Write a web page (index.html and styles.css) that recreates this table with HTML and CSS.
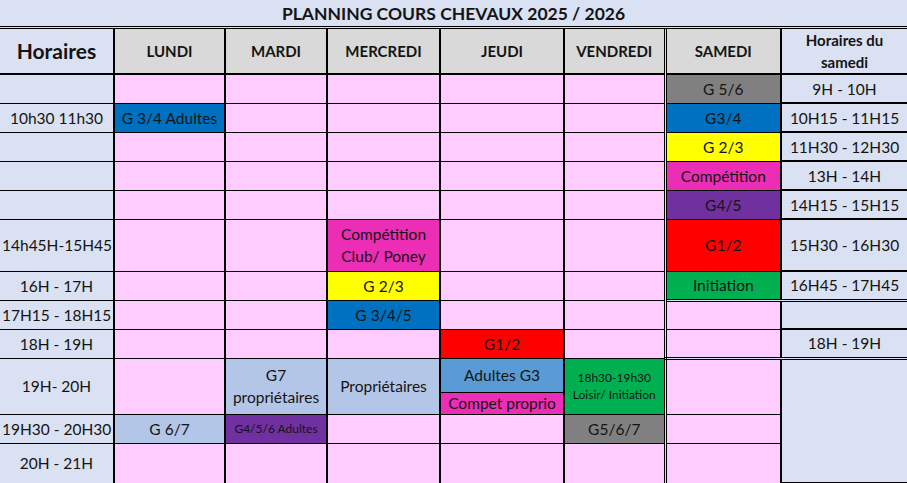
FILE: index.html
```html
<!DOCTYPE html>
<html lang="fr">
<head>
    <meta charset="UTF-8">
    <meta name="viewport" content="width=device-width, initial-scale=1.0">
    <title>Planning cours chevaux 2025 / 2026</title>
    <link rel="stylesheet" href="styles.css">
</head>
<body>

<table class="planning">
    <colgroup>
        <col class="c-time">
        <col class="c-lun">
        <col class="c-mar">
        <col class="c-mer">
        <col class="c-jeu">
        <col class="c-ven">
        <col class="c-sam">
        <col class="c-sat-time">
    </colgroup>
    <tr class="r-title">
        <td class="title" colspan="8">PLANNING COURS CHEVAUX 2025 / 2026</td>
    </tr>
    <tr class="r-head">
        <th class="time head-main">Horaires</th>
        <th class="day">LUNDI</th>
        <th class="day">MARDI</th>
        <th class="day">MERCREDI</th>
        <th class="day">JEUDI</th>
        <th class="day">VENDREDI</th>
        <th class="day sam">SAMEDI</th>
        <th class="sat-time head-sat">Horaires du<br>samedi</th>
    </tr>
    <tr class="r-slot">
        <td class="time"></td>
        <td class="pink"></td><td class="pink"></td><td class="pink"></td><td class="pink"></td><td class="pink"></td>
        <td class="sam gray">G 5/6</td>
        <td class="sat-time">9H - 10H</td>
    </tr>
    <tr class="r-slot">
        <td class="time">10h30 11h30</td>
        <td class="blue">G 3/4 Adultes</td>
        <td class="pink"></td><td class="pink"></td><td class="pink"></td><td class="pink"></td>
        <td class="sam blue">G3/4</td>
        <td class="sat-time">10H15 - 11H15</td>
    </tr>
    <tr class="r-slot">
        <td class="time"></td>
        <td class="pink"></td><td class="pink"></td><td class="pink"></td><td class="pink"></td><td class="pink"></td>
        <td class="sam yellow">G 2/3</td>
        <td class="sat-time">11H30 - 12H30</td>
    </tr>
    <tr class="r-slot">
        <td class="time"></td>
        <td class="pink"></td><td class="pink"></td><td class="pink"></td><td class="pink"></td><td class="pink"></td>
        <td class="sam magenta">Compétition</td>
        <td class="sat-time">13H - 14H</td>
    </tr>
    <tr class="r-slot">
        <td class="time"></td>
        <td class="pink"></td><td class="pink"></td><td class="pink"></td><td class="pink"></td><td class="pink"></td>
        <td class="sam purple">G4/5</td>
        <td class="sat-time">14H15 - 15H15</td>
    </tr>
    <tr class="r-tall">
        <td class="time">14h45H-15H45</td>
        <td class="pink"></td><td class="pink"></td>
        <td class="magenta two-lines">Compétition<br>Club/ Poney</td>
        <td class="pink"></td><td class="pink"></td>
        <td class="sam red">G1/2</td>
        <td class="sat-time">15H30 - 16H30</td>
    </tr>
    <tr class="r-slot">
        <td class="time">16H - 17H</td>
        <td class="pink"></td><td class="pink"></td>
        <td class="yellow">G 2/3</td>
        <td class="pink"></td><td class="pink"></td>
        <td class="sam green">Initiation</td>
        <td class="sat-time">16H45 - 17H45</td>
    </tr>
    <tr class="r-slot">
        <td class="time">17H15 - 18H15</td>
        <td class="pink"></td><td class="pink"></td>
        <td class="blue">G 3/4/5</td>
        <td class="pink"></td><td class="pink"></td>
        <td class="sam pink frame-top"></td>
        <td class="sat-time frame-top"></td>
    </tr>
    <tr class="r-slot">
        <td class="time">18H - 19H</td>
        <td class="pink"></td><td class="pink"></td><td class="pink"></td>
        <td class="red">G1/2</td>
        <td class="pink"></td>
        <td class="sam pink frame-bottom"></td>
        <td class="sat-time frame-bottom">18H - 19H</td>
    </tr>
    <tr class="r-split-a">
        <td class="time" rowspan="2">19H- 20H</td>
        <td class="pink" rowspan="2"></td>
        <td class="light two-lines" rowspan="2">G7<br>propriétaires</td>
        <td class="light" rowspan="2">Propriétaires</td>
        <td class="sky">Adultes G3</td>
        <td class="green small two-lines" rowspan="2">18h30-19h30<br>Loisir/ Initiation</td>
        <td class="sam pink" rowspan="2"></td>
        <td class="sat-time" rowspan="4"></td>
    </tr>
    <tr class="r-split-b">
        <td class="magenta">Compet proprio</td>
    </tr>
    <tr class="r-slot">
        <td class="time">19H30 - 20H30</td>
        <td class="light">G 6/7</td>
        <td class="purple small">G4/5/6 Adultes</td>
        <td class="pink"></td><td class="pink"></td>
        <td class="gray">G5/6/7</td>
        <td class="sam pink"></td>
    </tr>
    <tr class="r-last">
        <td class="time">20H - 21H</td>
        <td class="pink"></td><td class="pink"></td><td class="pink"></td><td class="pink"></td><td class="pink"></td>
        <td class="sam pink"></td>
    </tr>
</table>

</body>
</html>
```

FILE: styles.css
```css
html, body {
    margin: 0;
    height: 483px;
    overflow: hidden;
    background-color: #d9e1f2;
}
.planning {
    width: 907px;
    table-layout: fixed;
    border-collapse: collapse;
    font-family: Lato, "Open Sans", sans-serif;
    font-size: 15.5px;
    color: #141414;
}
.c-time { width: 114px; }
.c-lun { width: 111px; }
.c-mar { width: 102px; }
.c-mer { width: 113px; }
.c-jeu { width: 124px; }
.c-ven { width: 101px; }
.c-sam { width: 116px; }
.c-sat-time { width: 126px; }

.planning td,
.planning th {
    padding: 0 2px;
    text-align: center;
    vertical-align: middle;
    white-space: nowrap;
    overflow: hidden;
    border-top: 1px solid #000;
    border-bottom: 1px solid #000;
    border-left: 2px solid #000;
    border-right: 2px solid #000;
}

/* rows */
.r-title { height: 27px; }
.r-head { height: 47px; }
.r-slot { height: 29px; }
.r-tall { height: 52px; }
.r-split-a { height: 34px; }
.r-split-b { height: 22px; }
.r-last { height: 40px; }

.planning .title {
    background-color: #d9e1f2;
    border: none;
    border-bottom: 3px double #000;
    font-weight: 700;
    font-size: 17.5px;
    padding-top: 1px;
}
.planning th {
    border-top: 3px double #000;
    border-bottom: 2px solid #000;
}
.day {
    background-color: #d9d9d9;
    font-weight: 700;
    font-size: 15px;
}
.planning .head-main {
    font-weight: 700;
    font-size: 21px;
    text-align: center;
}
.head-sat {
    font-weight: 700;
    font-size: 15px;
    line-height: 22px;
}

/* side columns */
.time {
    background-color: #d9e1f2;
}
.planning .time {
    border-left: none;
}
.sat-time {
    background-color: #d9e1f2;
}
.planning .sat-time {
    border-right: none;
    border-top-width: 2px;
    border-bottom-width: 2px;
}
.planning .sam {
    border-left: 3px double #000;
}
.planning .frame-top {
    border-top: 3px double #000;
}
.planning .frame-bottom {
    border-bottom: 3px double #000;
}

/* course colours */
.pink { background-color: #ffccff; }
.gray { background-color: #808080; }
.blue { background-color: #0070c0; }
.yellow { background-color: #ffff00; }
.magenta { background-color: #ec2db5; }
.purple { background-color: #7030a0; }
.red { background-color: #ff0000; }
.green { background-color: #00b050; }
.light { background-color: #b4c6e7; }
.sky { background-color: #5b9bd5; }

.two-lines { line-height: 22px; }
.small { font-size: 12px; }
.small.two-lines { line-height: 17px; }
```
